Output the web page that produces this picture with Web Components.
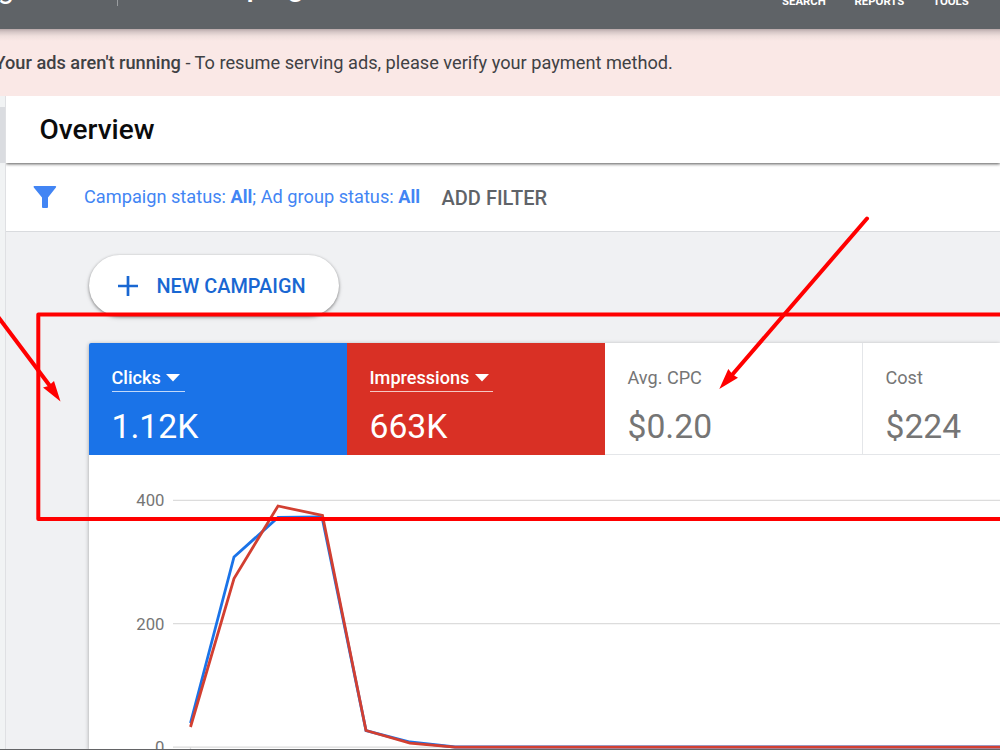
<!DOCTYPE html>
<html lang="en">
<head>
<meta charset="utf-8">
<title>Overview</title>
<style>
    html, body {
        margin: 0;
        height: 100%;
        overflow: hidden;
    }
    body {
        font-family: Roboto, "Liberation Sans", sans-serif;
        background: #f0f1f3;
    }
</style>
</head>
<body>
<ads-app></ads-app>

<script>
class AdsHeader extends HTMLElement {
    constructor() {
        super();

        const shadow = this.attachShadow({mode: 'open'});
        shadow.innerHTML = `
            <style>
                :host {
                    display: block;
                    height: 29px;
                    overflow: hidden;
                    color: white;
                    background: #5f6367;
                }
                .bar {
                    display: flex;
                    align-items: flex-end;
                    height: 50px;
                    margin-top: -42px;
                    white-space: nowrap;
                    line-height: 30px;
                }
                .logo {
                    margin-left: -55px;
                    margin-bottom: 5px;
                    font-size: 29px;
                    flex: 0 0 172px;
                }
                .divider {
                    width: 1px;
                    height: 48px;
                    margin-bottom: 2px;
                    background: #9a9da0;
                }
                .name {
                    margin-left: 28px;
                    margin-bottom: 7px;
                    font-size: 30px;
                    font-weight: 500;
                    flex: 1;
                }
                nav {
                    display: flex;
                    width: 218px;
                    font-size: 11.4px;
                    font-weight: 700;
                    line-height: 13px;
                }
                nav span:nth-child(1) { width: 72.5px; }
                nav span:nth-child(2) { width: 78.5px; }
            </style>
            <div class="bar">
                <div class="logo">Google Ads</div>
                <div class="divider"></div>
                <div class="name">All campaigns</div>
                <nav><span>SEARCH</span><span>REPORTS</span><span>TOOLS</span></nav>
            </div>
        `;
    }
}

class AdsNotice extends HTMLElement {
    constructor() {
        super();

        const shadow = this.attachShadow({mode: 'open'});
        shadow.innerHTML = `
            <style>
                :host {
                    display: flex;
                    align-items: center;
                    height: 67px;
                    color: #3f4144;
                    background: linear-gradient(#b9a9aa, #d6c7c7 3px, #efdfdd 7px, #fae8e6 12px);
                    font-size: 18.2px;
                    white-space: pre;
                }
                p { margin: 0 0 0 -5.5px; }
                ::slotted(b) { font-weight: 500; }
            </style>
            <p><slot></slot></p>
        `;
    }
}

class AdsTitle extends HTMLElement {
    constructor() {
        super();

        const shadow = this.attachShadow({mode: 'open'});
        shadow.innerHTML = `
            <style>
                :host {
                    display: flex;
                    align-items: center;
                    height: 67px;
                    padding-left: 33.5px;
                    color: #0b0b0c;
                    background: white;
                    box-shadow: 0 1px 3px #000a;
                    position: relative;
                    z-index: 1;
                    font-size: 28px;
                    font-weight: 500;
                }
            </style>
            <slot></slot>
        `;
    }
}

class AdsFilter extends HTMLElement {
    constructor() {
        super();

        const shadow = this.attachShadow({mode: 'open'});
        shadow.innerHTML = `
            <style>
                :host {
                    display: flex;
                    align-items: center;
                    height: 68px;
                    padding-left: 27px;
                    color: #4285f4;
                    background: white;
                    border-bottom: 1px solid #d9dbde;
                    font-size: 18.2px;
                    white-space: nowrap;
                }
                svg { margin-right: 27px; }
                .text { padding-bottom: 1px; }
                .add {
                    margin-left: 21.5px;
                    padding-top: 1px;
                    color: #5f6368;
                    font-size: 20px;
                    font-weight: 500;
                }
            </style>
            <svg width="24" height="24" viewBox="0 0 24 24">
                <path d="M1.2 1h21.2q1.4.3.5 1.6L15 12.5V22q0 1-1 1h-4q-1 0-1-1v-9.5L.8 2.6Q0 1.3 1.2 1z" fill="#4285f4"/>
            </svg>
            <span class="text"><slot></slot></span>
            <span class="add">ADD FILTER</span>
        `;
    }
}

class NewButton extends HTMLElement {
    constructor() {
        super();

        const shadow = this.attachShadow({mode: 'open'});
        shadow.innerHTML = `
            <style>
                :host {
                    display: flex;
                    align-items: center;
                    box-sizing: border-box;
                    width: 250px;
                    height: 61px;
                    padding-left: 29px;
                    border-radius: 31px;
                    color: #1967d2;
                    background: white;
                    box-shadow: 0 1px 3px #0006, 0 2px 5px #0002;
                    font-size: 19.9px;
                    font-weight: 500;
                    white-space: nowrap;
                }
                svg { margin-right: 18.5px; }
                span { padding-top: 1px; }
            </style>
            <svg width="20" height="20" viewBox="0 0 20 20">
                <path d="M10 0v20M0 10h20" stroke="#1967d2" stroke-width="2.7"/>
            </svg>
            <span><slot></slot></span>
        `;
    }
}

class ScoreTile extends HTMLElement {
    constructor() {
        super();

        const shadow = this.attachShadow({mode: 'open'});
        shadow.innerHTML = `
            <style>
                :host {
                    display: block;
                    box-sizing: border-box;
                    height: 112px;
                    padding: 22px 0 0 22.5px;
                    color: #757575;
                    border-right: 1px solid #e4e6e9;
                    border-bottom: 1px solid #e4e6e9;
                }
                :host([color]) {
                    color: white;
                    border: none;
                }
                :host([color=blue]) { background: #1a73e8; border-top-left-radius: 2px; }
                :host([color=red]) { background: #d93025; }
                .label {
                    display: inline-flex;
                    align-items: center;
                    height: 26px;
                    font-size: 18.1px;
                    border-bottom: 1px solid transparent;
                }
                .label span { padding-bottom: 2px; }
                :host([color]) .label {
                    border-color: #fffb;
                    font-weight: 500;
                }
                .label svg { margin: 0 4.5px 1px 5.5px; }
                :host(:not([color])) svg { display: none; }
                .value {
                    margin-top: 14px;
                    font-size: 33.7px;
                    line-height: 41px;
                }
            </style>
            <div class="label">
                <span></span>
                <svg width="14" height="8" viewBox="0 0 14 8"><path d="M0 0h14L7 7.5z" fill="white"/></svg>
            </div>
            <div class="value"><slot></slot></div>
        `;
        shadow.querySelector('span').textContent = this.getAttribute('label');
    }
}

class LineChart extends HTMLElement {
    constructor() {
        super();

        const shadow = this.attachShadow({mode: 'open'});
        shadow.innerHTML = `
            <style>
                :host { display: block; height: 295px; overflow: hidden; }
                svg { display: block; }
                text {
                    font-size: 16.7px;
                    fill: #757575;
                    text-anchor: end;
                }
                .grid { stroke: #dcdcdc; stroke-width: 1.3; }
                polyline { fill: none; stroke-width: 2.8; }
            </style>
            <svg width="911" height="295" viewBox="89 455 911 295">
                <path class="grid" d="M173 500.3H1000M173 623.7H1000M173 747.2H1000M190.5 747v3"/>
                <text x="164.5" y="506">400</text>
                <text x="164.5" y="629.5">200</text>
                <text x="164.5" y="753">0</text>
                <polyline stroke="#1a73e8" points="190.5,723 234,557 278,517.5 322,517 366,730.5 410,742 455,747 1000,747"/>
                <polyline stroke="#d23f31" points="190.5,727 234,578.5 278,506 322.5,515.5 366,730.5 410,743.2 455,747.2 1000,747.2"/>
            </svg>
        `;
    }
}

// Hand drawn marks that lie over the page
class RedMarks extends HTMLElement {
    constructor() {
        super();

        const shadow = this.attachShadow({mode: 'open'});
        shadow.innerHTML = `
            <style>
                :host {
                    position: absolute;
                    inset: 0;
                    z-index: 5;
                    pointer-events: none;
                }
                svg { display: block; }
            </style>
            <svg width="1000" height="750" viewBox="0 0 1000 750" fill="none" stroke="#f00" stroke-width="4" stroke-linecap="round" stroke-linejoin="round">
                <path d="M1004 314.5H38.3V519H1004"/>
                <path d="M867 218.5L732 375M-4 314L50 386"/>
                <path d="M719.3 389L728.3 369L731.5 373L735 376L738 377.8z" fill="#f00" stroke="none"/>
                <path d="M60.5 401.5L43 387.5L48.5 386L54 381z" fill="#f00" stroke="none"/>
            </svg>
        `;
    }
}

class AdsApp extends HTMLElement {
    constructor() {
        super();

        const shadow = this.attachShadow({mode: 'open'});
        shadow.innerHTML = `
            <style>
                :host {
                    display: flex;
                    flex-direction: column;
                    box-sizing: border-box;
                    width: 1000px;
                    height: 750px;
                    position: relative;
                    overflow: hidden;
                    border-bottom: 1px solid #636466;
                }
                .body { display: flex; flex: 1; min-height: 0; }
                aside {
                    width: 5px;
                    padding-top: 11px;
                    border-right: 1px solid #dfe0e3;
                    background: #f1f3f4;
                }
                aside div { height: 56px; background: #dadce0; }
                main { flex: 1; min-width: 0; overflow: hidden; }
                .content { padding: 23px 0 0 83px; }
                .card {
                    margin-top: 27px;
                    background: white;
                    box-shadow: 0 1px 4px #0005;
                    border-top-left-radius: 2px;
                }
                .tiles { display: grid; grid-template-columns: repeat(4, 258px); }
            </style>
            <ads-header></ads-header>
            <ads-notice><b>Your ads aren't running</b> - To resume serving ads, please verify your payment method.</ads-notice>
            <div class="body">
                <aside><div></div></aside>
                <main>
                    <ads-title>Overview</ads-title>
                    <ads-filter>Campaign status: <b>All</b>; Ad group status: <b>All</b></ads-filter>
                    <div class="content">
                        <new-button>NEW CAMPAIGN</new-button>
                        <div class="card">
                            <div class="tiles">
                                <score-tile label="Clicks" color="blue">1.12K</score-tile>
                                <score-tile label="Impressions" color="red">663K</score-tile>
                                <score-tile label="Avg. CPC">$0.20</score-tile>
                                <score-tile label="Cost">$224</score-tile>
                            </div>
                            <line-chart></line-chart>
                        </div>
                    </div>
                </main>
            </div>
            <red-marks></red-marks>
        `;
    }
}

customElements.define('ads-header', AdsHeader);
customElements.define('ads-notice', AdsNotice);
customElements.define('ads-title', AdsTitle);
customElements.define('ads-filter', AdsFilter);
customElements.define('new-button', NewButton);
customElements.define('score-tile', ScoreTile);
customElements.define('line-chart', LineChart);
customElements.define('red-marks', RedMarks);
customElements.define('ads-app', AdsApp);
</script>
</body>
</html>
